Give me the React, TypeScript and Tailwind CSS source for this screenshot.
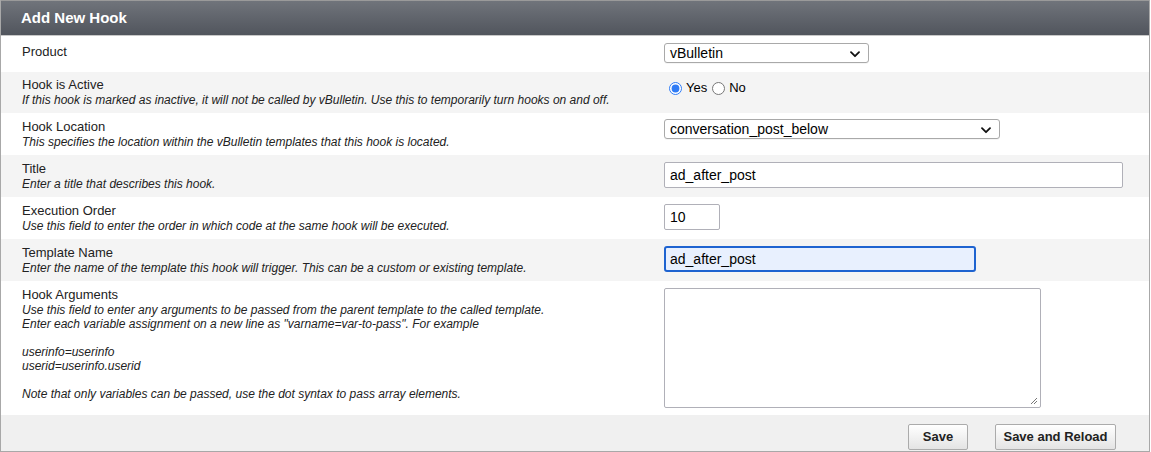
import React from "react";

const Chevron = () => (
  <svg width="10" height="7" viewBox="0 0 10 7" className="absolute right-[8px] top-[7px]">
    <path d="M1 1.2 L5 5.2 L9 1.2" fill="none" stroke="#111" strokeWidth="1.8" strokeLinecap="round" strokeLinejoin="round" />
  </svg>
);

function Select({ value, width }: { value: string; width: string }) {
  return (
    <div className={`relative ${width} h-[20px] border border-[#a9a9a9] rounded-[3px] bg-white shadow-[0_1px_0_rgba(0,0,0,0.04)]`}>
      <div className="pl-[5px] text-[14px] leading-[18px] text-black">{value}</div>
      <Chevron />
    </div>
  );
}

function Row({
  label,
  desc,
  bg,
  h,
  pt = "pt-[6px]",
  children,
}: {
  label: string;
  desc?: React.ReactNode;
  bg: string;
  h: string;
  pt?: string;
  children: React.ReactNode;
}) {
  return (
    <div className={`grid grid-cols-[655px_1fr] ${bg} ${h}`}>
      <div className={`pl-[21px] ${pt}`}>
        <div className="text-[13px] leading-[16px] text-[#222]">{label}</div>
        {desc && <div className="text-[12px] leading-[14px] italic text-[#222]">{desc}</div>}
      </div>
      <div className="pl-[8px]">{children}</div>
    </div>
  );
}

export default function App() {
  return (
    <div className="w-[1151px] h-[452px] bg-white" style={{ fontFamily: '"Liberation Sans", Arial, sans-serif' }}>
      <div className="w-[1150px] h-[452px] border-x border-b border-[#a8a8a8] flex flex-col">
        <div className="h-[36px] bg-gradient-to-b from-[#70747b] to-[#51555d] border-t border-[#9a9a9a] border-b border-b-[#c8c8c8] pl-[20px] flex items-center">
          <span className="text-white font-bold text-[15px]">Add New Hook</span>
        </div>
        <Row label="Product" bg="bg-white" h="h-[36px]" pt="pt-[8px]">
          <div className="pt-[7px]">
            <Select value="vBulletin" width="w-[205px]" />
          </div>
        </Row>
        <Row
          label="Hook is Active"
          desc="If this hook is marked as inactive, it will not be called by vBulletin. Use this to temporarily turn hooks on and off."
          bg="bg-[#f4f4f4]"
          h="h-[41px]"
          pt="pt-[5px]"
        >
          <div className="pt-[8px] pl-[5px] flex items-center text-[13px] leading-[16px] text-black">
            <input type="radio" name="active" defaultChecked className="w-[13px] h-[13px] m-0 accent-[#2f7bf5]" />
            <span className="ml-[4px]">Yes</span>
            <input type="radio" name="active" className="w-[13px] h-[13px] m-0 ml-[5px]" />
            <span className="ml-[4px]">No</span>
          </div>
        </Row>
        <Row
          label="Hook Location"
          desc="This specifies the location within the vBulletin templates that this hook is located."
          bg="bg-white"
          h="h-[42px]"
        >
          <div className="pt-[6px]">
            <Select value="conversation_post_below" width="w-[336px]" />
          </div>
        </Row>
        <Row label="Title" desc="Enter a title that describes this hook." bg="bg-[#f4f4f4]" h="h-[42px]">
          <div className="pt-[7px]">
            <div className="w-[459px] h-[26px] border border-[#b0b0b8] rounded-[2px] bg-white pl-[5px] text-[14px] leading-[24px] text-black">
              ad_after_post
            </div>
          </div>
        </Row>
        <Row
          label="Execution Order"
          desc="Use this field to enter the order in which code at the same hook will be executed."
          bg="bg-white"
          h="h-[42px]"
        >
          <div className="pt-[7px]">
            <div className="w-[56px] h-[26px] border border-[#b0b0b8] rounded-[2px] bg-white pl-[5px] text-[14px] leading-[24px] text-black">
              10
            </div>
          </div>
        </Row>
        <Row
          label="Template Name"
          desc="Enter the name of the template this hook will trigger. This can be a custom or existing template."
          bg="bg-[#f4f4f4]"
          h="h-[42px]"
        >
          <div className="pt-[7px]">
            <div className="w-[312px] h-[26px] border-2 border-[#1e63d0] rounded-[3px] bg-[#e8f0fe] pl-[4px] text-[14px] leading-[22px] text-black">
              ad_after_post
            </div>
          </div>
        </Row>
        <Row
          label="Hook Arguments"
          desc={
            <>
              Use this field to enter any arguments to be passed from the parent template to the called template.
              <br />
              Enter each variable assignment on a new line as "varname=var-to-pass". For example
              <br />
              <br />
              userinfo=userinfo
              <br />
              userid=userinfo.userid
              <br />
              <br />
              Note that only variables can be passed, use the dot syntax to pass array elements.
            </>
          }
          bg="bg-white"
          h="h-[134px]"
        >
          <div className="pt-[7px]">
            <div className="relative w-[377px] h-[120px] border border-[#b0b0b8] rounded-[2px] bg-white">
              <svg width="8" height="8" viewBox="0 0 8 8" className="absolute right-[2px] bottom-[2px]">
                <path d="M7 1 L1 7 M7 4 L4 7" stroke="#777" strokeWidth="1" />
              </svg>
            </div>
          </div>
        </Row>
        <div className="flex-1 bg-[#f0f0f0] flex justify-end items-start pt-[9px] pr-[33px] gap-[27px]">
          <button className="h-[26px] w-[60px] border border-[#ababab] rounded-[2px] bg-gradient-to-b from-white to-[#e4e4e4] text-[13px] font-bold text-[#222]">
            Save
          </button>
          <button className="h-[26px] w-[121px] border border-[#ababab] rounded-[2px] bg-gradient-to-b from-white to-[#e4e4e4] text-[13px] font-bold text-[#222]">
            Save and Reload
          </button>
        </div>
      </div>
    </div>
  );
}
